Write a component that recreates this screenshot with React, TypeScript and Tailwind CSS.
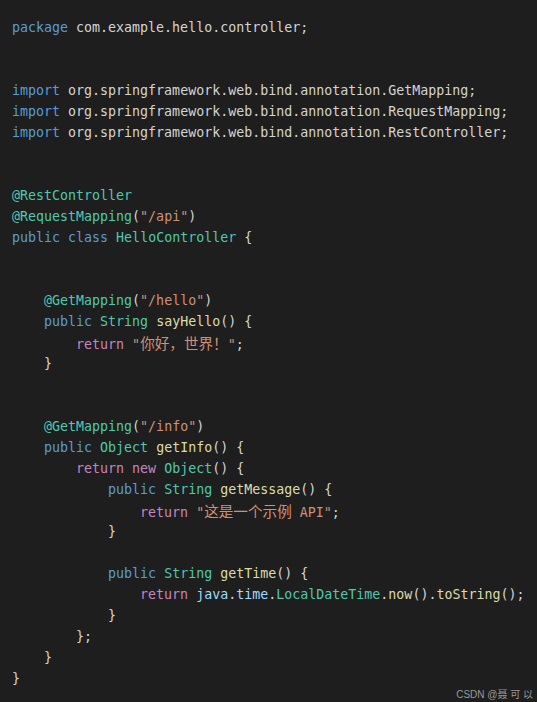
import React from "react";

type Tok = [string, string];

const K = "text-[#569cd6]"; // keyword
const C = "text-[#c586c0]"; // control
const T = "text-[#4ec9b0]"; // type
const F = "text-[#dcdcaa]"; // function
const S = "text-[#ce9178]"; // string
const D = "text-[#d4d4d4]"; // default
const V = "text-[#9cdcfe]"; // variable

const Cjk = ({ children }: { children: React.ReactNode }) => (
  <span className="text-[14.6px] [font-family:'Noto_Sans_CJK_SC',sans-serif]">{children}</span>
);

const lines: (Tok | [string, React.ReactNode])[][] = [
  [[K, "package"], [D, " com.example.hello.controller;"]],
  [],
  [],
  [[K, "import"], [D, " org.springframework.web.bind.annotation.GetMapping;"]],
  [[K, "import"], [D, " org.springframework.web.bind.annotation.RequestMapping;"]],
  [[K, "import"], [D, " org.springframework.web.bind.annotation.RestController;"]],
  [],
  [],
  [[T, "@RestController"]],
  [[T, "@RequestMapping"], [D, "("], [S, "\"/api\""], [D, ")"]],
  [[K, "public"], [D, " "], [K, "class"], [D, " "], [T, "HelloController"], [D, " {"]],
  [],
  [],
  [[D, "    "], [T, "@GetMapping"], [D, "("], [S, "\"/hello\""], [D, ")"]],
  [[D, "    "], [K, "public"], [D, " "], [T, "String"], [D, " "], [F, "sayHello"], [D, "() {"]],
  [[D, "        "], [C, "return"], [D, " "], [S, <>{"\""}<Cjk>你好，世界！</Cjk>{"\""}</>], [D, ";"]],
  [[D, "    }"]],
  [],
  [],
  [[D, "    "], [T, "@GetMapping"], [D, "("], [S, "\"/info\""], [D, ")"]],
  [[D, "    "], [K, "public"], [D, " "], [T, "Object"], [D, " "], [F, "getInfo"], [D, "() {"]],
  [[D, "        "], [C, "return"], [D, " "], [C, "new"], [D, " "], [T, "Object"], [D, "() {"]],
  [[D, "            "], [K, "public"], [D, " "], [T, "String"], [D, " "], [F, "getMessage"], [D, "() {"]],
  [[D, "                "], [C, "return"], [D, " "], [S, <>{"\""}<Cjk>这是一个示例</Cjk>{" API\""}</>], [D, ";"]],
  [[D, "            }"]],
  [],
  [[D, "            "], [K, "public"], [D, " "], [T, "String"], [D, " "], [F, "getTime"], [D, "() {"]],
  [[D, "                "], [C, "return"], [D, " "], [V, "java"], [D, "."], [V, "time"], [D, "."], [T, "LocalDateTime"], [D, "."], [F, "now"], [D, "()."], [F, "toString"], [D, "();"]],
  [[D, "            }"]],
  [[D, "        };"]],
  [[D, "    }"]],
  [[D, "}"]],
];

export default function App() {
  return (
    <div className="w-[537px] h-[702px] bg-[#1e1e1e] overflow-hidden flex flex-col">
      <div className="pt-[17px] pl-[12px] text-[13.3px] leading-[21px] [font-family:'DejaVu_Sans_Mono','Noto_Sans_CJK_SC',monospace] text-[#d4d4d4]">
        {lines.map((ln, i) => (
          <div key={i} className="h-[21px] whitespace-pre">
            {ln.length === 0 ? " " : ln.map((t, j) => (
              <span key={j} className={t[0]}>{t[1]}</span>
            ))}
          </div>
        ))}
      </div>
      <div className="mt-auto mb-[8px] mr-[4px] self-end text-[10px] leading-[12px] text-[#9a9a9a] [font-family:'Liberation_Sans','Noto_Sans_CJK_SC',sans-serif]">
        CSDN @聂 可 以
      </div>
    </div>
  );
}
